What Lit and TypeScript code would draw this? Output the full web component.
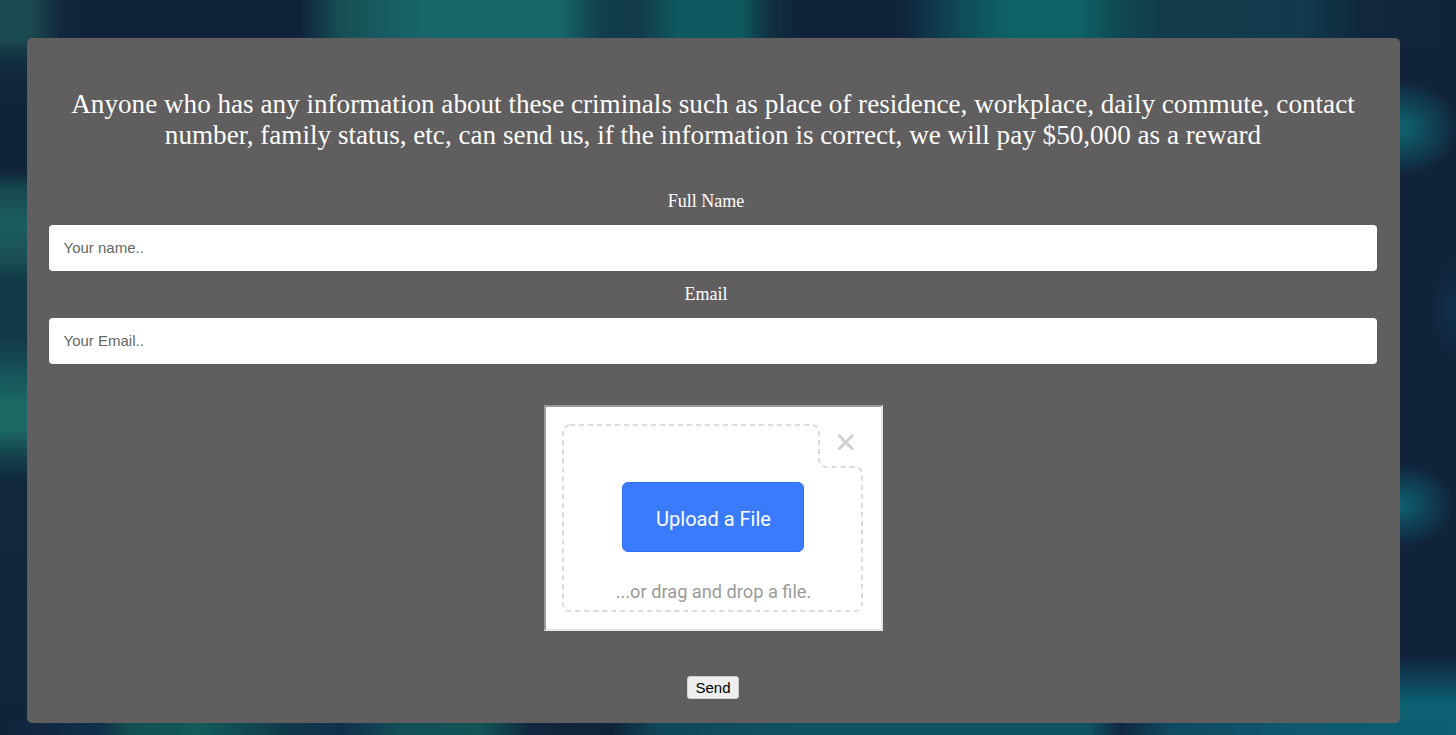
import { LitElement, html, css, svg } from "lit";
import { customElement } from "lit/decorators.js";

@customElement("app-root")
export class AppRoot extends LitElement {
  static styles = css`
    :host {
      display: block;
      width: 1456px;
      height: 735px;
      overflow: hidden;
      background-color: #10233a;
      background-repeat: no-repeat;
      background-image:
        linear-gradient(90deg, #1a4a50 0, #1a4a50 30px, #12283e 60px, #10233a 85px, #10233a 300px, #174f55 340px, #17666a 420px, #17666a 560px, #123f4c 600px, #123c4a 640px, #0f5a60 680px, #0f5a60 740px, #10303f 770px, #10233a 800px, #10233a 900px, #0f4a58 960px, #0e6268 1010px, #0e6268 1080px, #0f4850 1120px, #123c4c 1160px, #123a4c 1300px, #10283e 1360px, #10233a 1456px),
        linear-gradient(90deg, #10233a 0, #10304a 100px, #12504f 130px, #125a5c 200px, #10384a 290px, #10304a 340px, #124f58 400px, #125458 480px, #10283f 530px, #10233a 610px, #0f4858 660px, #0f5262 800px, #0f5262 1090px, #10283f 1120px, #0f4a60 1170px, #0f5870 1300px, #0c6072 1456px),
        linear-gradient(180deg, #1a4a50 0, #1a4a50 38px, #122d40 60px, #10233a 100px, #10233a 170px, #174a50 190px, #1b5e60 225px, #1a4e54 260px, #123a48 280px, #123a48 340px, #16505a 370px, #1b6762 400px, #1b6762 430px, #143c4a 460px, #10283e 480px, #10233a 735px),
        linear-gradient(180deg, transparent 0, transparent 655px, #0f4058 680px, #0c6072 702px, #0c6072 735px),
        radial-gradient(ellipse 60px 48px at 1400px 128px, #10606c 0%, #10606c 10%, transparent 100%),
        radial-gradient(ellipse 30px 50px at 1456px 310px, #12304a 0%, transparent 100%),
        radial-gradient(ellipse 55px 42px at 1400px 505px, #0f5a6c 0%, #0f5a6c 10%, transparent 100%);
      background-size: 100% 42px, 100% 16px, 32px 100%, 60px 100%, 100% 100%, 100% 100%, 100% 100%;
      background-position: 0 0, 0 100%, 0 0, 100% 0, 0 0, 0 0, 0 0;
      padding: 38px 56px 12px 27px;
      box-sizing: border-box;
      font-family: "Liberation Serif", "Times New Roman", serif;
    }
    .card {
      height: 685px;
      box-sizing: border-box;
      background: #605e5f;
      border-radius: 5px;
      padding: 51px 23px 0 22px;
      color: #fff;
      text-align: center;
    }
    h1 {
      margin: 0;
      font-size: 27.15px;
      font-weight: 400;
      line-height: 31px;
    }
    label {
      display: block;
      font-size: 18px;
      line-height: 20px;
      padding-right: 14px;
    }
    .name-label { margin: 40px 0 14px; }
    .email-label { margin: 13px 0 14px; }
    .field {
      display: block;
      width: 100%;
      height: 46px;
      box-sizing: border-box;
      border: 0;
      border-radius: 4px;
      background: #fff;
      padding: 0 14.5px;
      font: 15px/46px "Liberation Sans", Arial, sans-serif;
      color: #555;
    }
    .field::placeholder { color: #666; opacity: 1; }
    .uploader {
      position: relative;
      display: flex;
      flex-direction: column;
      align-items: center;
      width: 339px;
      height: 226px;
      margin: 41px 0 0 495px;
      box-sizing: border-box;
      background: #fff;
      border: 2px solid;
      border-color: #9a9a9a #e6e6e6 #e6e6e6 #9a9a9a;
      font-family: Roboto, "Open Sans", sans-serif;
    }
    .outline {
      position: absolute;
      left: -2px;
      top: -2px;
    }
    .upload {
      margin: 75px 2px 0 0;
      width: 182px;
      height: 70px;
      flex: none;
      box-sizing: border-box;
      border: 1px solid #2f6fef;
      border-radius: 6px;
      background: #3a7bfd;
      color: #fff;
      font: 400 20px/1 Roboto, "Open Sans", sans-serif;
      padding: 3px 0 0 2px;
    }
    .hint {
      margin-top: 28px;
      font-size: 18.2px;
      line-height: 24px;
      color: #9a9a9a;
    }
    .send-row {
      display: flex;
      justify-content: center;
      margin: 45px 0 0;
    }
    .send {
      width: 52px;
      height: 23px;
      padding: 0;
      box-sizing: border-box;
      border: 1px solid #d0d0d0;
      border-radius: 3px;
      background: #efefef;
      color: #000;
      font: 15px/1 "Liberation Sans", Arial, sans-serif;
    }
  `;

  render() {
    return html`
      <div class="card">
        <h1>Anyone who has any information about these criminals such as place of residence, workplace, daily commute, contact number, family status, etc, can send us, if the information is correct, we will pay $50,000 as a reward</h1>
        <label class="name-label" for="n">Full Name</label>
        <input class="field" id="n" type="text" placeholder="Your name.." />
        <label class="email-label" for="e">Email</label>
        <input class="field" id="e" type="text" placeholder="Your Email.." />
        <div class="uploader">
          <svg class="outline" width="339" height="226" viewBox="0 0 339 226" fill="none">
            ${svg`<path d="M26 20 H268 a7 7 0 0 1 7 7 V54 a8 8 0 0 0 8 8 H311 a7 7 0 0 1 7 7 V199 a7 7 0 0 1 -7 7 H26 a7 7 0 0 1 -7 -7 V27 a7 7 0 0 1 7 -7 Z" stroke="#dcdcdc" stroke-width="2" stroke-dasharray="5 4"/>
            <path d="M294.5 30 L309 44.5 M309 30 L294.5 44.5" stroke="#d0d0d0" stroke-width="3"/>`}
          </svg>
          <button class="upload">Upload a File</button>
          <div class="hint">...or drag and drop a file.</div>
        </div>
        <div class="send-row"><button class="send">Send</button></div>
      </div>
    `;
  }
}
